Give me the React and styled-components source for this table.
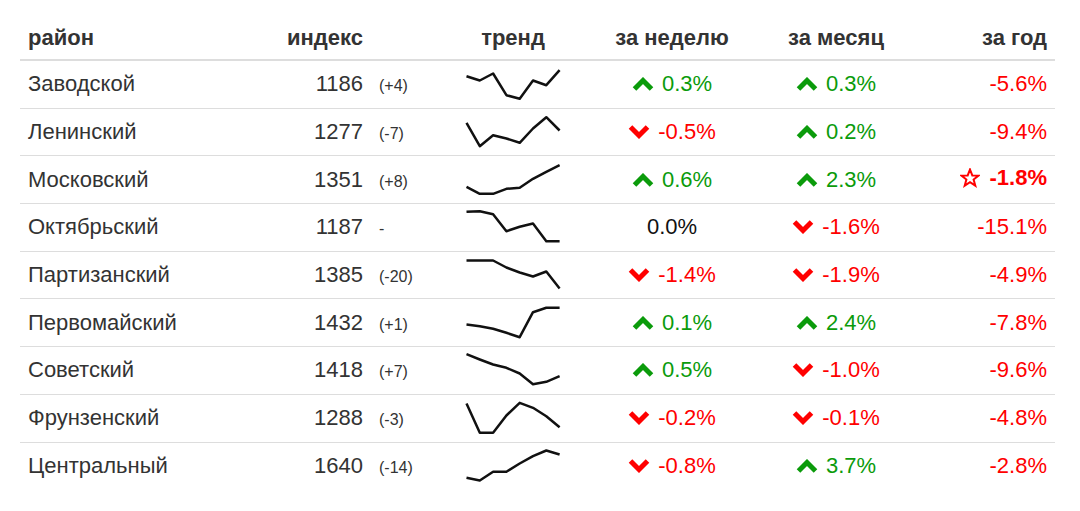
import React from "react";
import styled, { createGlobalStyle } from "styled-components";

const GlobalStyle = createGlobalStyle`
  body {
    margin: 0;
    background: #fff;
    font-family: "Liberation Sans", Arial, Helvetica, sans-serif;
    color: #333;
  }
`;

const Page = styled.div`
  padding: 20px;
`;

const Table = styled.table`
  width: 1035px;
  table-layout: fixed;
  border-collapse: collapse;
  font-size: 22px;
`;

const Th = styled.th`
  height: 36px;
  padding: 0 8px 3px;
  font-weight: bold;
  color: #333;
  text-align: ${(p) => p.align || "left"};
  border-bottom: 2px solid #ddd;
  vertical-align: middle;
`;

const Tr = styled.tr`
  &:last-child td {
    border-bottom: none;
  }
`;

const Td = styled.td`
  height: 46.7px;
  padding: 0 8px;
  text-align: ${(p) => p.align || "left"};
  border-bottom: 1px solid #ddd;
  vertical-align: middle;
  white-space: nowrap;
`;

const Change = styled.span`
  font-size: 16px;
`;

const Delta = styled.span`
  display: inline-flex;
  align-items: center;
  gap: ${(p) => (p.bold ? "10px" : "8px")};
  color: ${(p) => (p.value > 0 ? "#0b9b0b" : p.value < 0 ? "#f00" : "#111")};
  font-weight: ${(p) => (p.bold ? "bold" : "normal")};
`;

const SparkBox = styled.svg`
  display: block;
  margin: 0 auto;
`;

const Chevron = ({ up }) => (
  <svg width="22" height="14" viewBox="0 0 22 14">
    <polyline
      points={up ? "2.5,12 11,3.5 19.5,12" : "2.5,2 11,10.5 19.5,2"}
      fill="none"
      stroke="currentColor"
      strokeWidth="5"
      strokeLinejoin="miter"
    />
  </svg>
);

const Star = () => (
  <svg width="20" height="20" viewBox="0 0 20 20">
    <polygon
      points="10,1.5 12.3,7.4 18.5,7.6 13.6,11.5 15.3,17.6 10,14.1 4.7,17.6 6.4,11.5 1.5,7.6 7.7,7.4"
      fill="none"
      stroke="currentColor"
      strokeWidth="2"
      strokeLinejoin="miter"
    />
  </svg>
);

const Sparkline = ({ points }) => {
  const d = points
    .map((y, i) => `${(1.5 + i * 13.3).toFixed(1)},${y - 0.5}`)
    .join(" ");
  return (
    <SparkBox width="96" height="46" viewBox="0 0 96 46">
      <polyline points={d} fill="none" stroke="#111" strokeWidth="2.5" strokeLinejoin="round" />
    </SparkBox>
  );
};

const rows = [
  { name: "Заводской", index: 1186, change: "(+4)", trend: [15.7, 20, 13, 34.7, 38.3, 20, 24.7, 9.7], week: 0.3, month: 0.3, year: -5.6 },
  { name: "Ленинский", index: 1277, change: "(-7)", trend: [14.3, 37.7, 26.7, 30, 34.3, 20, 8.7, 22], week: -0.5, month: 0.2, year: -9.4 },
  { name: "Московский", index: 1351, change: "(+8)", trend: [30.3, 37.3, 37.3, 32.3, 31.3, 22.3, 15.3, 8.7], week: 0.6, month: 2.3, year: -1.8, best: true },
  { name: "Октябрьский", index: 1187, change: "-", trend: [8.3, 7.7, 10.7, 27.7, 23.3, 20, 37.7, 37.7], week: 0, month: -1.6, year: -15.1 },
  { name: "Партизанский", index: 1385, change: "(-20)", trend: [9, 9, 9, 16, 21, 25, 20, 37], week: -1.4, month: -1.9, year: -4.9 },
  { name: "Первомайский", index: 1432, change: "(+1)", trend: [25, 26.7, 29.3, 33.3, 37.7, 12.7, 8.3, 8.3], week: 0.1, month: 2.4, year: -7.8 },
  { name: "Советский", index: 1418, change: "(+7)", trend: [7.7, 13, 18, 21.3, 27, 37.7, 35.3, 29.7], week: 0.5, month: -1.0, year: -9.6 },
  { name: "Фрунзенский", index: 1288, change: "(-3)", trend: [9, 38.3, 38.3, 21, 8.3, 13.3, 21.7, 32.7], week: -0.2, month: -0.1, year: -4.8 },
  { name: "Центральный", index: 1640, change: "(-14)", trend: [35.3, 38, 29.3, 29.3, 21, 13.7, 8, 12], week: -0.8, month: 3.7, year: -2.8 },
];

const fmt = (v) => `${v.toFixed(1)}%`;

const DeltaCell = ({ value }) => (
  <Delta value={value}>
    {value !== 0 && <Chevron up={value > 0} />}
    {fmt(value)}
  </Delta>
);

export default function App() {
  return (
    <Page>
      <GlobalStyle />
      <Table>
        <colgroup>
          <col style={{ width: 240 }} />
          <col style={{ width: 111 }} />
          <col style={{ width: 79 }} />
          <col style={{ width: 126 }} />
          <col style={{ width: 192 }} />
          <col style={{ width: 136 }} />
          <col style={{ width: 151 }} />
        </colgroup>
        <thead>
          <tr>
            <Th>район</Th>
            <Th align="right">индекс</Th>
            <Th></Th>
            <Th align="center">тренд</Th>
            <Th align="center">за неделю</Th>
            <Th align="center">за месяц</Th>
            <Th align="right">за год</Th>
          </tr>
        </thead>
        <tbody>
          {rows.map((r) => (
            <Tr key={r.name}>
              <Td>{r.name}</Td>
              <Td align="right">{r.index}</Td>
              <Td>
                <Change>{r.change}</Change>
              </Td>
              <Td align="center">
                <Sparkline points={r.trend} />
              </Td>
              <Td align="center">
                <DeltaCell value={r.week} />
              </Td>
              <Td align="center">
                <DeltaCell value={r.month} />
              </Td>
              <Td align="right">
                <Delta value={r.year} bold={r.best}>
                  {r.best && <Star />}
                  {fmt(r.year)}
                </Delta>
              </Td>
            </Tr>
          ))}
        </tbody>
      </Table>
    </Page>
  );
}
